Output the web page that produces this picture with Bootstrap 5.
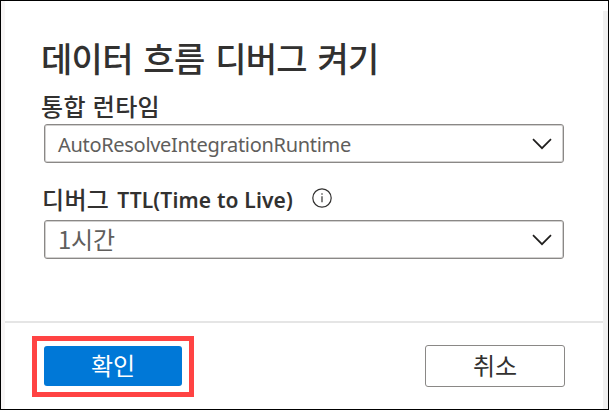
<!DOCTYPE html>
<html lang="ko">
<head>
<meta charset="utf-8">
<meta name="viewport" content="width=device-width, initial-scale=1">
<title>데이터 흐름 디버그 켜기</title>
<link href="https://cdn.jsdelivr.net/npm/bootstrap@5.3.0/dist/css/bootstrap.min.css" rel="stylesheet">
<style>
body{width:609px;height:410px;overflow:hidden;color:#323130;font-family:"Noto Sans","Noto Sans CJK KR",sans-serif;background:#fff}
.panel{height:410px;border:1px solid #000;background:linear-gradient(#f7f5f5,#f7f5f5) 0 0/4px 100% no-repeat,linear-gradient(#f0f0f0,#f0f0f0) 100% 10px/5px 100% no-repeat #fff}
.panel-main{height:320px;padding:34px 44px 0 43px}
.ko{font-family:"Noto Sans CJK KR",sans-serif}
.panel-title{font-size:34px;line-height:46px;font-weight:500;margin:0 0 9px -3px;letter-spacing:-.7px;word-spacing:1.8px}
.field-label{font-size:24px;line-height:32px;height:34px;font-weight:500;margin-left:-3px;letter-spacing:.3px}
.ttl-ko{margin-left:1px;padding-bottom:2px}
.field-label .en{font-size:21px;font-weight:600;letter-spacing:.15px;line-height:32px;padding-top:1px}
.picker{height:39px;border:1px solid #8a8886;box-shadow:inset 0 0 0 1px #d2d1d0;border-radius:3px;padding:0 11px 0 13px;color:#605e5c;font-size:20px;line-height:36px;background:#fff;text-align:left}
.runtime{letter-spacing:-.31px;padding-top:2px}
.hours{font-size:24px;font-weight:400;letter-spacing:-.2px;padding-bottom:2px}
.second{margin-top:23px;padding-bottom:7px}
.info{margin-left:19px;margin-top:-3px}
.panel-foot{height:88px;margin:0 5px 0 4px;border-top:2px solid #e5e5e5;padding:13px 38px 0 27px}
.callout-ring{width:162px;height:61px;border:5px solid #ff4343;padding:5px 7px}
.action{font-size:24px;line-height:36px;padding:0 0 2px;border-radius:3px}
.ok{width:138px;height:40px;background:#0078d7;color:#fff;border:0}
.cancel{width:140px;height:42px;margin-top:9px;border:1px solid #8a8886;color:#323130;background:#fff}
</style>
<script src="https://cdn.jsdelivr.net/npm/bootstrap@5.3.0/dist/js/bootstrap.bundle.min.js"></script>
</head>
<body>
<div class="panel d-flex flex-column">
  <main class="panel-main">
    <h1 class="panel-title ko"><span>데이터 흐름 디버그 켜기</span></h1>
    <div class="field-label ko"><span>통합 런타임</span></div>
    <button type="button" class="picker w-100 d-flex align-items-center justify-content-between">
      <span class="runtime">AutoResolveIntegrationRuntime</span>
      <svg width="20" height="12" viewBox="0 0 20 12" fill="none" stroke="#201f1e" stroke-width="1.7"><path d="M1 1.2 10 10.2 19 1.2"/></svg>
    </button>
    <div class="field-label second d-flex align-items-center">
      <span class="ko ttl-ko">디버그</span><span class="en ms-2">TTL(Time to Live)</span>
      <svg class="info" width="20" height="20" viewBox="0 0 20 20" fill="none" stroke="#323130"><circle cx="10" cy="10" r="9.2" stroke-width="1.2"/><path d="M10 8.3v6" stroke-width="1.2"/><circle cx="10" cy="6" r=".8" fill="#323130" stroke="none"/></svg>
    </div>
    <button type="button" class="picker w-100 d-flex align-items-center justify-content-between">
      <span class="hours ko">1시간</span>
      <svg width="20" height="12" viewBox="0 0 20 12" fill="none" stroke="#201f1e" stroke-width="1.7"><path d="M1 1.2 10 10.2 19 1.2"/></svg>
    </button>
  </main>
  <footer class="panel-foot d-flex justify-content-between align-items-start">
    <div class="callout-ring"><button type="button" class="btn action ok ko">확인</button></div>
    <button type="button" class="btn action cancel ko">취소</button>
  </footer>
</div>
</body>
</html>
